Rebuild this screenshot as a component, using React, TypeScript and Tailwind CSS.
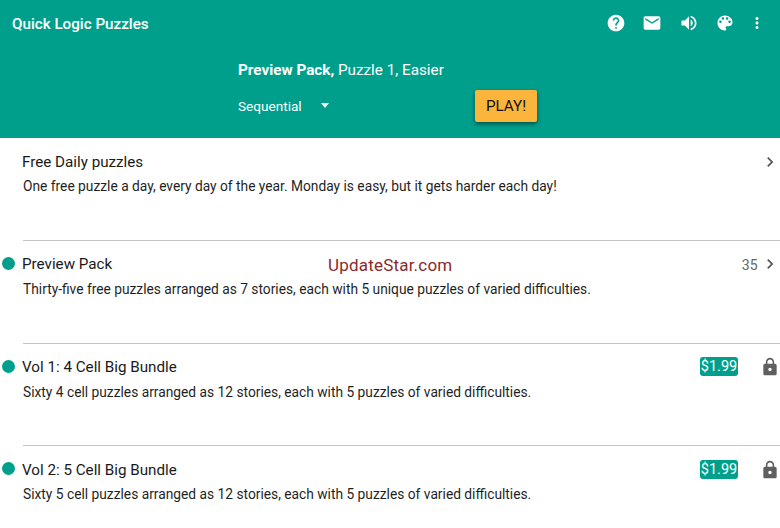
const P = {
  help: "M12 2C6.48 2 2 6.48 2 12s4.48 10 10 10 10-4.48 10-10S17.52 2 12 2zm1 17h-2v-2h2v2zm2.07-7.75l-.9.92C13.45 12.9 13 13.5 13 15h-2v-.5c0-1.1.45-2.1 1.17-2.83l1.24-1.26c.37-.36.59-.86.59-1.41 0-1.1-.9-2-2-2s-2 .9-2 2H8c0-2.21 1.79-4 4-4s4 1.79 4 4c0 .88-.36 1.68-.93 2.25z",
  email: "M20 4H4c-1.1 0-1.99.9-1.99 2L2 18c0 1.1.9 2 2 2h16c1.1 0 2-.9 2-2V6c0-1.1-.9-2-2-2zm0 4l-8 5-8-5V6l8 5 8-5v2z",
  volume: "M3 9v6h4l5 5V4L7 9H3zm13.5 3c0-1.77-1.02-3.29-2.5-4.03v8.05c1.48-.73 2.5-2.25 2.5-4.02zM14 3.23v2.06c2.89.86 5 3.54 5 6.71s-2.11 5.85-5 6.71v2.06c4.01-.91 7-4.49 7-8.77s-2.99-7.86-7-8.77z",
  palette: "M12 3c-4.97 0-9 4.03-9 9s4.03 9 9 9c.83 0 1.5-.67 1.5-1.5 0-.39-.15-.74-.39-1.01-.23-.26-.38-.61-.38-.99 0-.83.67-1.5 1.5-1.5H16c2.76 0 5-2.24 5-5 0-4.42-4.03-8-9-8zm-5.5 9c-.83 0-1.5-.67-1.5-1.5S5.67 9 6.5 9 8 9.67 8 10.5 7.33 12 6.5 12zm3-4C8.67 8 8 7.33 8 6.5S8.67 5 9.5 5s1.5.67 1.5 1.5S10.33 8 9.5 8zm5 0c-.83 0-1.5-.67-1.5-1.5S13.67 5 14.5 5s1.5.67 1.5 1.5S15.33 8 14.5 8zm3 4c-.83 0-1.5-.67-1.5-1.5S16.67 9 17.5 9s1.5.67 1.5 1.5-.67 1.5-1.5 1.5z",
  more: "M12 8c1.1 0 2-.9 2-2s-.9-2-2-2-2 .9-2 2 .9 2 2 2zm0 2c-1.1 0-2 .9-2 2s.9 2 2 2 2-.9 2-2-.9-2-2-2zm0 6c-1.1 0-2 .9-2 2s.9 2 2 2 2-.9 2-2-.9-2-2-2z",
  lock: "M18 8h-1V6c0-2.76-2.24-5-5-5S7 3.24 7 6v2H6c-1.1 0-2 .9-2 2v10c0 1.1.9 2 2 2h12c1.1 0 2-.9 2-2V10c0-1.1-.9-2-2-2zm-6 9c-1.1 0-2-.9-2-2s.9-2 2-2 2 .9 2 2-.9 2-2 2zm3.1-9H8.9V6c0-1.71 1.39-3.1 3.1-3.1 1.71 0 3.1 1.39 3.1 3.1v2z",
  chevron: "M10 6L8.59 7.41 13.17 12l-4.58 4.59L10 18l6-6z",
};

function Icon({ d, className }: { d: string; className: string }) {
  return (
    <svg viewBox="0 0 24 24" className={className} fill="currentColor">
      <path d={d} />
    </svg>
  );
}

function Row({ title, desc, dot, right, divider }: { title: string; desc: string; dot?: boolean; right: React.ReactNode; divider?: boolean }) {
  return (
    <div className="h-[102.6px] relative shrink-0">
      {divider && <div className="absolute left-[23px] right-0 top-0 h-px bg-[#c4c4c4]" />}
      {dot && <div className="absolute left-[2px] top-[17px] w-[13px] h-[13px] rounded-full bg-[#009f8b]" />}
      <div className="flex items-center justify-between pl-[22px] pt-[14.4px] h-[34px]">
        <span className="text-[15.2px] leading-[20px] text-[#1a1a1a]">{title}</span>
        {right}
      </div>
      <div className="pl-[23px] mt-[4.8px] text-[13.78px] leading-[20px] text-[#1f1f1f]">{desc}</div>
    </div>
  );
}

function Price() {
  return (
    <div className="flex items-center">
      <span className="bg-[#009f8b] text-white text-[14.5px] leading-[19px] rounded-[3px] w-[38px] text-center">$1.99</span>
      <Icon d={P.lock} className="w-[20px] h-[20px] ml-[22px] text-[#5f5f5f]" />
    </div>
  );
}

function Chevron() {
  return <Icon d={P.chevron} className="w-[20px] h-[20px] text-[#555]" />;
}

export default function App() {
  return (
    <div className="w-[780px] h-[528px] overflow-hidden bg-white relative font-['Roboto',sans-serif]">
      <header className="h-[137.6px] bg-[#009f8b] text-white relative z-10">
        <div className="flex items-center justify-between h-[48px] pl-[12px] pr-[19.5px]">
          <span className="text-[15.2px] font-medium">Quick Logic Puzzles</span>
          <div className="flex items-center gap-[16.5px] -translate-y-px">
            <Icon d={P.help} className="w-[20px] h-[20px]" />
            <Icon d={P.email} className="w-[20px] h-[20px]" />
            <Icon d={P.volume} className="w-[20px] h-[20px]" />
            <Icon d={P.palette} className="w-[20px] h-[20px]" />
            <Icon d={P.more} className="w-[18px] h-[18px] -ml-[4px] -mr-[5px]" />
          </div>
        </div>
        <div className="pl-[238px] w-[537px]">
          <div className="text-[15.25px] leading-[20px] mt-[12px]">
            <span className="font-bold">Preview Pack,</span> Puzzle 1, Easier
          </div>
          <div className="flex items-center justify-between mt-[10px]">
            <div className="flex items-center text-[13.6px]">
              <span>Sequential</span>
              <span className="ml-[19px] w-0 h-0 border-x-[4.5px] border-x-transparent border-t-[5px] border-t-white" />
            </div>
            <button className="w-[62px] h-[32px] bg-[#fbb53c] text-[#111] text-[15.2px] rounded-[2px] shadow-[0_2px_4px_rgba(0,0,0,0.5)]">PLAY!</button>
          </div>
        </div>
      </header>
      <div className="flex flex-col">
        <Row title="Free Daily puzzles" desc="One free puzzle a day, every day of the year. Monday is easy, but it gets harder each day!" right={<Chevron />} />
        <Row dot divider title="Preview Pack" desc="Thirty-five free puzzles arranged as 7 stories, each with 5 unique puzzles of varied difficulties." right={
          <div className="flex items-center">
            <span className="text-[14px] text-[#666] mr-[2px] tracking-[0.3px] translate-y-[1px]">35</span>
            <Chevron />
          </div>
        } />
        <Row dot divider title="Vol 1: 4 Cell Big Bundle" desc="Sixty 4 cell puzzles arranged as 12 stories, each with 5 puzzles of varied difficulties." right={<Price />} />
        <Row dot divider title="Vol 2: 5 Cell Big Bundle" desc="Sixty 5 cell puzzles arranged as 12 stories, each with 5 puzzles of varied difficulties." right={<Price />} />
      </div>
      <div className="absolute left-[328px] top-[255px] text-[17px] leading-[20px] tracking-[0.2px] text-[#8b2a2a]">UpdateStar.com</div>
    </div>
  );
}
